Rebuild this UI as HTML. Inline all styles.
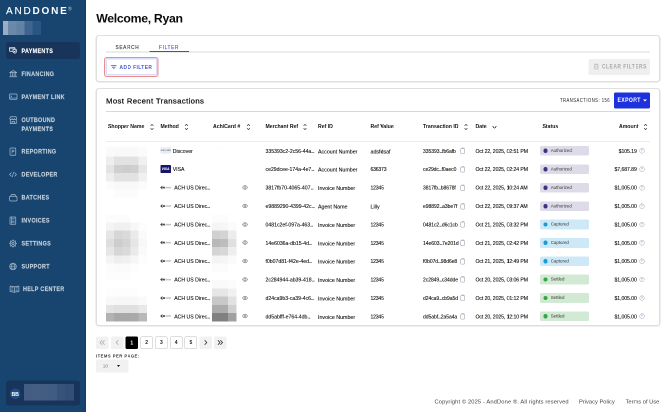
<!DOCTYPE html>
<html lang="en">
<head>
<meta charset="utf-8">
<title>AndDone - Payments</title>
<style>
*{box-sizing:border-box;margin:0;padding:0}
html,body{width:670px;height:412px;overflow:hidden;background:#fff}
body{font-family:"Liberation Sans",sans-serif;color:#111}
#root{position:absolute;left:0;top:0;width:1340px;height:824px;transform:scale(.5);transform-origin:0 0;will-change:transform;background:#fff;overflow:hidden}
.abs{position:absolute}
/* sidebar */
#side{position:absolute;left:0;top:0;width:171.6px;height:824px;background:#17456f;border-right:3px solid #143f69}
#logo{position:absolute;left:12px;top:9px;font-size:20px;letter-spacing:3.6px;color:#fff;white-space:nowrap;line-height:24px}
#logo b{font-weight:700}
#logo sup{color:#9fb2c8;font-size:10.5px;letter-spacing:0;position:relative;top:-7.5px;left:-1.5px;vertical-align:baseline;font-weight:700}
#logo span{-webkit-text-stroke:.25px #fff}
.nav{position:absolute;left:43px;font-size:12.3px;font-weight:700;letter-spacing:.7px;color:#c3d0dd;line-height:18px;white-space:nowrap;transform:translateY(-9px) scaleX(.88);transform-origin:0 50%;-webkit-text-stroke:.3px currentColor}
.nav.on{color:#fff}
.navbox{position:absolute;left:12.1px;width:147.9px;background:#18345b;border-radius:5px}
.ico{position:absolute;left:17px;width:17px;height:17px}
/* main */
h1{position:absolute;left:192.5px;top:20.8px;letter-spacing:-.6px;font-size:24.5px;font-weight:700;line-height:32px;white-space:nowrap;color:#0b0b0b}
.card{position:absolute;left:190.6px;width:1130.8px;border:3.4px solid #dfdfdf;border-top-width:2.2px;border-radius:7px;background:#fff}
.tab{position:absolute;font-size:11px;letter-spacing:1.6px;line-height:14px;top:86.7px;color:#333;white-space:nowrap;transform:scaleX(.86);transform-origin:0 50%;-webkit-text-stroke:.25px currentColor}
.hl{position:absolute;left:212px;width:1088px;height:2.4px;background:#d8d8d8}
.th{position:absolute;top:244.5px;font-size:10.3px;font-weight:700;line-height:16px;white-space:nowrap;color:#111}
.row{position:absolute;left:0;width:1340px;height:0}
.c{position:absolute;font-size:10.3px;line-height:14px;top:-5.6px;white-space:nowrap;color:#000;-webkit-text-stroke:.15px #000}
.c.t{font-size:10.6px}.c.n{letter-spacing:-.45px}.c.d{letter-spacing:-.18px}.c.i{font-size:10px;letter-spacing:-.08px}.c.a{font-size:10.3px;letter-spacing:-.15px}.e{letter-spacing:-1px}
.pill{position:absolute;left:1080px;top:-9.5px;width:98px;height:19.7px;border-radius:3px;font-size:8.8px;line-height:19.7px;padding-left:21.5px;color:#333}
.pill i{position:absolute;left:6.500px;top:5.500px;width:8.600px;height:8.600px;border-radius:50%}
.au{background:#dcdbe7}.au i{background:#3d3380}
.ca{background:#cde9f7}.ca i{background:#1a9bd8}
.se{background:#d2e9d3}.se i{background:#36a546}
.pg{position:absolute;top:672.6px;width:25.2px;height:25.2px;border-radius:3px;font-size:10px;font-weight:700;line-height:25.6px;text-align:center;color:#222}
.pg.o{border:1.5px solid #bdbdbd;line-height:22.2px}
.pg.g{background:#f1f1f1;color:#999}
.px{position:absolute}
</style>
</head>
<body>
<div id="root">
<div id="side">
  <div id="logo"><span>AND</span><b>DONE</b><sup>®</sup></div>
  <i class="px" style="left:6.0px;top:41.8px;width:10.6px;height:7.9px;background:#9db0c8"></i><i class="px" style="left:16.3px;top:41.8px;width:16.6px;height:7.9px;background:#6d8aac"></i><i class="px" style="left:32.6px;top:41.8px;width:16.6px;height:7.9px;background:#6483a6"></i><i class="px" style="left:48.9px;top:41.8px;width:16.6px;height:7.9px;background:#3f6590"></i><i class="px" style="left:65.2px;top:41.8px;width:16.5px;height:7.9px;background:#2a5683"></i><i class="px" style="left:6.0px;top:49.4px;width:10.6px;height:16.8px;background:#98acc5"></i><i class="px" style="left:16.3px;top:49.4px;width:16.6px;height:16.8px;background:#6a88aa"></i><i class="px" style="left:32.6px;top:49.4px;width:16.6px;height:16.8px;background:#6282a5"></i><i class="px" style="left:48.9px;top:49.4px;width:16.6px;height:16.8px;background:#3e648f"></i><i class="px" style="left:65.2px;top:49.4px;width:16.5px;height:16.8px;background:#295582"></i><i class="px" style="left:6.0px;top:65.9px;width:10.6px;height:3.8px;background:#98acc5"></i><i class="px" style="left:16.3px;top:65.9px;width:16.6px;height:3.8px;background:#6a88aa"></i><i class="px" style="left:32.6px;top:65.9px;width:16.6px;height:3.8px;background:#6282a5"></i><i class="px" style="left:48.9px;top:65.9px;width:16.6px;height:3.8px;background:#3e648f"></i><i class="px" style="left:65.2px;top:65.9px;width:16.5px;height:3.8px;background:#295582"></i>
  <div class="navbox" style="top:84px;height:33.5px"></div>
  <svg class="abs" style="left:18px;top:93.6px" width="16" height="13.4" viewBox="0 0 18 15" fill="none" stroke="#ffffff" stroke-width="1.5" stroke-linejoin="round" stroke-linecap="round"><rect x="1" y="1" width="12.5" height="8.5" rx="1.5"/><path d="M1 4h12.5"/><path d="M9 6.2l4-1.4 4 1.400v3.200c0 2.400-1.800 3.900-4 4.600-2.200-.7-4-2.200-4-4.600z" fill="#18345b"/><path d="M11.300 9.600l1.300 1.300 2.200-2.500"/></svg>
  <svg class="abs" style="left:18px;top:140px" width="17" height="15" viewBox="0 0 17 15" fill="none" stroke="#a9bbce" stroke-width="1.4" stroke-linejoin="round" stroke-linecap="round"><path d="M1.500 5.200L8.500 1.200l7 4z"/><path d="M3.500 6.800v5M6.800 6.800v5M10.200 6.800v5M13.500 6.800v5M1.500 13.500h14"/></svg>
  <svg class="abs" style="left:18px;top:187px" width="17" height="13" viewBox="0 0 17 13" fill="none" stroke="#a9bbce" stroke-width="1.4" stroke-linejoin="round" stroke-linecap="round"><rect x="1" y="1" width="15" height="10.500" rx="1.500"/><path d="M3.500 4.500l2 1.500-2 1.500M1.500 9h14" stroke-width="1.1"/></svg>
  <svg class="abs" style="left:18px;top:232px" width="17" height="17" viewBox="0 0 17 17" fill="none" stroke="#a9bbce" stroke-width="1.4" stroke-linejoin="round" stroke-linecap="round"><path d="M2.500 7.500v7.500h12V7.500M1.500 5l1.500-3.500h11L15.500 5c0 1.300-1 2.200-2.300 2.200S10.800 6.300 10.800 5c0 1.300-1 2.200-2.300 2.200S6.200 6.300 6.200 5c0 1.300-1 2.200-2.300 2.200S1.500 6.300 1.500 5zM6 15v-4h5v4"/></svg>
  <svg class="abs" style="left:19px;top:295px" width="14" height="17" viewBox="0 0 14 17" fill="none" stroke="#a9bbce" stroke-width="1.4" stroke-linejoin="round" stroke-linecap="round"><rect x="1" y="1" width="11.500" height="14.500" rx="1.800"/><path d="M5.200 11.500V5h2.200c1.200 0 1.900.7 1.900 1.700s-.7 1.700-1.900 1.700H5.200" stroke-width="1.2"/></svg>
  <svg class="abs" style="left:17.5px;top:343px" width="17" height="12" viewBox="0 0 17 12" fill="none" stroke="#a9bbce" stroke-width="1.4" stroke-linejoin="round" stroke-linecap="round"><path d="M4.500 2.500L1.200 6l3.300 3.500M11.500 2.500L14.800 6l-3.300 3.500M9.300 1.200L6.700 10.800" stroke-width="1.300"/></svg>
  <svg class="abs" style="left:18px;top:387.5px" width="17" height="15" viewBox="0 0 17 15" fill="none" stroke="#a9bbce" stroke-width="1.4" stroke-linejoin="round" stroke-linecap="round"><rect x="1" y="4.500" width="15" height="9.500" rx="2.200"/><path d="M4 4.500V3.200C4 2 4.800 1.200 6 1.200h5c1.200 0 2 .8 2 2v1.300"/></svg>
  <svg class="abs" style="left:19px;top:433px" width="14" height="17" viewBox="0 0 14 17" fill="none" stroke="#a9bbce" stroke-width="1.4" stroke-linejoin="round" stroke-linecap="round"><rect x="1" y="1" width="11.500" height="14.500" rx="1"/><path d="M3.500 4.500h6.500M3.500 7h6.500M3.500 9.500h6.500M3.500 12h6.500" stroke-width="1"/><path d="M4.200 1v14.500" stroke-width="1"/></svg>
  <svg class="abs" style="left:17.5px;top:479px" width="16" height="16" viewBox="0 0 16 16" fill="none" stroke="#a9bbce" stroke-width="1.4" stroke-linejoin="round" stroke-linecap="round"><circle cx="8" cy="8" r="5.600"/><circle cx="8" cy="8" r="2.300"/><path d="M8 .8v1.800M8 13.400v1.800M.8 8h1.800M13.400 8h1.800M2.900 2.900l1.300 1.300M11.800 11.800l1.300 1.300M2.900 13.100l1.300-1.300M11.800 4.200l1.300-1.300" stroke-width="1.600"/></svg>
  <svg class="abs" style="left:17.5px;top:525px" width="16" height="16" viewBox="0 0 16 16" fill="none" stroke="#a9bbce" stroke-width="1.4" stroke-linejoin="round" stroke-linecap="round"><circle cx="8" cy="8" r="6.600"/><ellipse cx="8" cy="8" rx="3" ry="6.600" stroke-width="1.100"/><path d="M1.500 8h13M2.500 4.700h11M2.500 11.300h11" stroke-width="1.100"/></svg>
  <svg class="abs" style="left:18.5px;top:570.5px" width="20" height="15" viewBox="0 0 20 15" fill="none" stroke="#a9bbce" stroke-width="1.4" stroke-linejoin="round" stroke-linecap="round"><path d="M10 3C8.500 1.800 6 1.300 1.200 1.300v10.900C6 12.200 8.500 12.700 10 13.900c1.500-1.200 4-1.700 8.800-1.700V1.300C14 1.300 11.500 1.800 10 3zM10 3v10.900"/><path d="M3.500 4.500h4M3.500 7h4M3.500 9.500h4M12.500 4.500h4M12.500 7h4M12.500 9.500h4" stroke-width="1"/></svg>
  <div class="nav on" style="top:102px">PAYMENTS</div>
  <div class="nav" style="top:148px">FINANCING</div>
  <div class="nav" style="top:194px">PAYMENT LINK</div>
  <div class="nav" style="top:240px">OUTBOUND</div>
  <div class="nav" style="top:258px">PAYMENTS</div>
  <div class="nav" style="top:303px">REPORTING</div>
  <div class="nav" style="top:349px">DEVELOPER</div>
  <div class="nav" style="top:395px">BATCHES</div>
  <div class="nav" style="top:441px">INVOICES</div>
  <div class="nav" style="top:487px">SETTINGS</div>
  <div class="nav" style="top:533px">SUPPORT</div>
  <div class="nav" style="top:578px;left:45.5px">HELP CENTER</div>
  <div class="navbox" style="top:761px;height:50px"></div>
  <i class="px" style="left:47.8px;top:768.2px;width:1.4px;height:6.7px;background:#435d82"></i><i class="px" style="left:48.9px;top:768.2px;width:16.6px;height:6.7px;background:#435d82"></i><i class="px" style="left:65.2px;top:768.2px;width:16.6px;height:6.7px;background:#445e83"></i><i class="px" style="left:81.5px;top:768.2px;width:16.6px;height:6.7px;background:#435d82"></i><i class="px" style="left:97.8px;top:768.2px;width:16.6px;height:6.7px;background:#425c81"></i><i class="px" style="left:114.1px;top:768.2px;width:16.6px;height:6.7px;background:#38537a"></i><i class="px" style="left:130.4px;top:768.2px;width:16.6px;height:6.7px;background:#344f77"></i><i class="px" style="left:146.7px;top:768.2px;width:1.6px;height:6.7px;background:#344f77"></i><i class="px" style="left:47.8px;top:774.6px;width:1.4px;height:16.8px;background:#435d82"></i><i class="px" style="left:48.9px;top:774.6px;width:16.6px;height:16.8px;background:#435d82"></i><i class="px" style="left:65.2px;top:774.6px;width:16.6px;height:16.8px;background:#445e83"></i><i class="px" style="left:81.5px;top:774.6px;width:16.6px;height:16.8px;background:#435d82"></i><i class="px" style="left:97.8px;top:774.6px;width:16.6px;height:16.8px;background:#425c81"></i><i class="px" style="left:114.1px;top:774.6px;width:16.6px;height:16.8px;background:#38537a"></i><i class="px" style="left:130.4px;top:774.6px;width:16.6px;height:16.8px;background:#344f77"></i><i class="px" style="left:146.7px;top:774.6px;width:1.6px;height:16.8px;background:#344f77"></i><i class="px" style="left:47.8px;top:791.0px;width:1.4px;height:9.7px;background:#435d82"></i><i class="px" style="left:48.9px;top:791.0px;width:16.6px;height:9.7px;background:#435d82"></i><i class="px" style="left:65.2px;top:791.0px;width:16.6px;height:9.7px;background:#445e83"></i><i class="px" style="left:81.5px;top:791.0px;width:16.6px;height:9.7px;background:#435d82"></i><i class="px" style="left:97.8px;top:791.0px;width:16.6px;height:9.7px;background:#425c81"></i><i class="px" style="left:114.1px;top:791.0px;width:16.6px;height:9.7px;background:#38537a"></i><i class="px" style="left:130.4px;top:791.0px;width:16.6px;height:9.7px;background:#344f77"></i><i class="px" style="left:146.7px;top:791.0px;width:1.6px;height:9.7px;background:#344f77"></i>
  <div class="abs" style="left:19.5px;top:776.5px;width:21.5px;height:21.5px;border-radius:50%;background:#1f4d85;color:#fff;font-size:10.5px;letter-spacing:-.3px;font-weight:700;line-height:22px;text-align:center">BB</div>
</div>

<h1>Welcome, Ryan</h1>

<div class="card" style="top:70px;height:95.2px"></div>
<div class="tab" style="left:231px">SEARCH</div>
<div class="tab" style="left:318px;color:#3a4bd6">FILTER</div>
<div class="hl" style="top:102.8px"></div>
<div class="abs" style="left:298.5px;top:101.5px;width:79px;height:2.5px;background:#3a4bd6"></div>
<div class="abs" style="left:208.2px;top:113.7px;width:108.8px;height:40px;border:2.4px solid #ea8f8c;border-radius:5.5px;background:#fff"></div>
<div class="abs" style="left:210.6px;top:116.1px;width:104px;height:35.2px;border:3px solid #d9ddfb;border-radius:3.5px;background:#fff"></div>
<svg class="abs" style="left:221px;top:129.5px" width="13" height="9" viewBox="0 0 13 9" stroke="#4355e0" stroke-width="1.600" fill="none"><path d="M.8 1.200h11.400M3 4.400h7M5.200 7.500h2.600"/></svg>
<div class="abs" style="left:239px;top:127px;font-size:11.3px;font-weight:700;letter-spacing:1px;line-height:14px;color:#4355e0;white-space:nowrap;transform:scaleX(.86);transform-origin:0 50%">ADD FILTER</div>
<div class="abs" style="left:1177.2px;top:118px;width:122.8px;height:31.8px;border-radius:3px;background:#efefef"></div>
<svg class="abs" style="left:1186.5px;top:127.3px" width="11" height="12" viewBox="0 0 11 13" preserveAspectRatio="none" stroke="#b4b4b4" stroke-width="1.300" fill="none"><path d="M1 3h9M3.500 3V1.300h4V3M2 3v7.700c0 .8.500 1.300 1.300 1.300h4.400c.8 0 1.300-.5 1.300-1.300V3M2.500 7.500h6"/></svg>
<div class="abs" style="left:1203.5px;top:126.3px;font-size:12px;font-weight:700;letter-spacing:1.1px;line-height:14px;color:#a9a9a9;white-space:nowrap;transform:scaleX(.83);transform-origin:0 50%">CLEAR FILTERS</div>

<div class="card" style="top:176.2px;height:477px"></div>
<div class="abs" style="left:212px;top:190.8px;font-size:15.5px;letter-spacing:.72px;line-height:22px;white-space:nowrap;color:#111;-webkit-text-stroke:.5px #111">Most Recent Transactions</div>
<div class="abs" style="left:1120px;top:194px;font-size:10px;letter-spacing:1.1px;line-height:14px;white-space:nowrap;color:#222;transform:scaleX(.84);transform-origin:0 50%">TRANSACTIONS: 156</div>
<div class="abs" style="left:1228px;top:184.5px;width:72px;height:32px;border-radius:3px;background:#1d32dc"></div>
<div class="abs" style="left:1234.5px;top:193.3px;font-size:12px;font-weight:700;letter-spacing:.9px;line-height:14px;color:#fff;white-space:nowrap;transform:scaleX(.85);transform-origin:0 50%">EXPORT</div>
<div class="abs" style="left:1286px;top:198.5px;width:0;height:0;border-left:4px solid transparent;border-right:4px solid transparent;border-top:4.6px solid #fff"></div>
<div class="hl" style="top:222px"></div>

<div class="th" style="left:216px">Shopper Name</div>
<div class="th" style="left:321px">Method</div>
<div class="th" style="left:426px">Ach/Card #</div>
<div class="th" style="left:531px">Merchant Ref</div>
<div class="th" style="left:636px">Ref ID</div>
<div class="th" style="left:741px">Ref Value</div>
<div class="th" style="left:846px">Transaction ID</div>
<div class="th" style="left:951px">Date</div>
<div class="th" style="left:1085px">Status</div>
<div class="th" style="left:1238px">Amount</div>
<svg class="abs" style="left:299.8px;top:246.5px" width="8" height="14" viewBox="0 0 8 14" fill="none" stroke="#222" stroke-width="1.3"><path d="M1.200 4.400L4 1.800l2.800 2.600M1.200 9.600L4 12.200l2.800-2.600"/></svg><svg class="abs" style="left:368.6px;top:246.5px" width="8" height="14" viewBox="0 0 8 14" fill="none" stroke="#222" stroke-width="1.3"><path d="M1.200 4.400L4 1.800l2.800 2.600M1.200 9.600L4 12.200l2.800-2.600"/></svg><svg class="abs" style="left:493.0px;top:246.5px" width="8" height="14" viewBox="0 0 8 14" fill="none" stroke="#222" stroke-width="1.3"><path d="M1.200 4.400L4 1.800l2.800 2.600M1.200 9.600L4 12.200l2.800-2.600"/></svg><svg class="abs" style="left:606.4px;top:246.5px" width="8" height="14" viewBox="0 0 8 14" fill="none" stroke="#222" stroke-width="1.3"><path d="M1.200 4.400L4 1.800l2.800 2.600M1.200 9.600L4 12.200l2.800-2.600"/></svg><svg class="abs" style="left:928.4px;top:246.5px" width="8" height="14" viewBox="0 0 8 14" fill="none" stroke="#222" stroke-width="1.3"><path d="M1.200 4.400L4 1.800l2.800 2.600M1.200 9.600L4 12.200l2.800-2.600"/></svg><svg class="abs" style="left:1287.4px;top:246.5px" width="8" height="14" viewBox="0 0 8 14" fill="none" stroke="#222" stroke-width="1.3"><path d="M1.200 4.400L4 1.800l2.800 2.600M1.200 9.600L4 12.200l2.800-2.600"/></svg><svg class="abs" style="left:983.5px;top:250.5px" width="10" height="7" viewBox="0 0 10 7" fill="none" stroke="#222" stroke-width="1.3"><path d="M1.200 1.200L5 5.200l3.800-4"/></svg>
<div class="hl" style="top:281.5px;height:1.5px"></div>

<div class="row" style="top:301.2px"><div class="abs" style="left:320.6px;top:-6.3px;width:21px;height:12.6px;border-radius:1.5px;background:#e9ecf2;border:.8px solid #dde3ec;font-size:3.8px;line-height:11px;text-align:center;color:#56749e;font-weight:700;letter-spacing:.1px">DISC<span style="color:#e2562f">●</span>VER</div><div class="c" style="left:345.5px">Discover</div><div class="c" style="left:531px">335393c2-2c56-44a<span class="e">...</span></div><div class="c t" style="left:636px">Account Number</div><div class="c t" style="left:741px">adsfdsaf</div><div class="c i" style="left:846px">335393<span class="e">...</span>fb6afb</div><svg class="abs" style="left:920px;top:-6.5px" width="11" height="13" viewBox="0 0 11 13"><rect x="1.2" y="2.2" width="8.2" height="10" rx="1.6" fill="#fff" stroke="#8893a8" stroke-width="1"/><path d="M3.2 1h5.4" stroke="#8893a8" stroke-width="1"/></svg><div class="c d" style="left:951px">Oct 22, 2025, 02:51 PM</div><div class="pill au"><i></i>Authorized</div><div class="c a" style="right:66.5px">$105.19</div><div class="abs" style="left:1278.5px;top:-5px;width:10.5px;height:10.5px;border-radius:50%;border:1px solid #9aa6ba;font-size:6.5px;line-height:8.5px;text-align:center;color:#8d99ae;font-weight:700">?</div></div>
<div class="row" style="top:338.0px"><div class="abs" style="left:320.6px;top:-7.6px;width:21px;height:15.2px;border-radius:1.5px;background:#17166f;font-size:7px;line-height:15.2px;text-align:center;color:#fff;font-weight:700;font-style:italic;letter-spacing:-.2px">VISA</div><div class="c" style="left:345.5px">VISA</div><div class="c" style="left:531px">ce29dcee-174a-4e7<span class="e">...</span></div><div class="c t" style="left:636px">Account Number</div><div class="c n" style="left:741px">636373</div><div class="c i" style="left:846px">ce29dc<span class="e">...</span>f0aec0</div><svg class="abs" style="left:920px;top:-6.5px" width="11" height="13" viewBox="0 0 11 13"><rect x="1.2" y="2.2" width="8.2" height="10" rx="1.6" fill="#fff" stroke="#8893a8" stroke-width="1"/><path d="M3.2 1h5.4" stroke="#8893a8" stroke-width="1"/></svg><div class="c d" style="left:951px">Oct 22, 2025, 02:24 PM</div><div class="pill au"><i></i>Authorized</div><div class="c a" style="right:66.5px">$7,687.89</div><div class="abs" style="left:1278.5px;top:-5px;width:10.5px;height:10.5px;border-radius:50%;border:1px solid #9aa6ba;font-size:6.5px;line-height:8.5px;text-align:center;color:#8d99ae;font-weight:700">?</div></div>
<div class="row" style="top:375.0px"><svg class="abs" style="left:320px;top:-5px" width="23" height="10" viewBox="0 0 23 10" fill="none"><path d="M5 2L1.300 5.100 5 8.200M1.800 5.100h6.400M6.800 3.300l3 3.600M9.800 3.300l-3 3.600" stroke="#2a2a2a" stroke-width="1.250"/><path d="M11 4.300h11M11 6h11" stroke="#9a9a9a" stroke-width=".9"/></svg><div class="c" style="left:348.5px">ACH US Direc<span class="e">...</span></div><svg class="abs" style="left:483.5px;top:-5px" width="12" height="10" viewBox="0 0 12 10"><path d="M.8 5C2.2 2.4 4 1.3 6 1.3S9.8 2.4 11.2 5C9.8 7.6 8 8.7 6 8.7S2.2 7.6.8 5Z" fill="none" stroke="#555" stroke-width="1"/><circle cx="6" cy="5" r="2.1" fill="none" stroke="#555" stroke-width="1"/></svg><div class="c" style="left:531px">3817fb70-4065-407<span class="e">...</span></div><div class="c t" style="left:636px">Invoice Number</div><div class="c n" style="left:741px">12345</div><div class="c i" style="left:846px">3817fb<span class="e">...</span>b8678f</div><svg class="abs" style="left:920px;top:-6.5px" width="11" height="13" viewBox="0 0 11 13"><rect x="1.2" y="2.2" width="8.2" height="10" rx="1.6" fill="#fff" stroke="#8893a8" stroke-width="1"/><path d="M3.2 1h5.4" stroke="#8893a8" stroke-width="1"/></svg><div class="c d" style="left:951px">Oct 22, 2025, 10:24 AM</div><div class="pill au"><i></i>Authorized</div><div class="c a" style="right:66.5px">$1,005.00</div><div class="abs" style="left:1278.5px;top:-5px;width:10.5px;height:10.5px;border-radius:50%;border:1px solid #9aa6ba;font-size:6.5px;line-height:8.5px;text-align:center;color:#8d99ae;font-weight:700">?</div></div>
<div class="row" style="top:412.0px"><svg class="abs" style="left:320px;top:-5px" width="23" height="10" viewBox="0 0 23 10" fill="none"><path d="M5 2L1.300 5.100 5 8.200M1.800 5.100h6.400M6.800 3.300l3 3.600M9.800 3.300l-3 3.600" stroke="#2a2a2a" stroke-width="1.250"/><path d="M11 4.300h11M11 6h11" stroke="#9a9a9a" stroke-width=".9"/></svg><div class="c" style="left:348.5px">ACH US Direc<span class="e">...</span></div><svg class="abs" style="left:483.5px;top:-5px" width="12" height="10" viewBox="0 0 12 10"><path d="M.8 5C2.2 2.4 4 1.3 6 1.3S9.8 2.4 11.2 5C9.8 7.6 8 8.7 6 8.7S2.2 7.6.8 5Z" fill="none" stroke="#555" stroke-width="1"/><circle cx="6" cy="5" r="2.1" fill="none" stroke="#555" stroke-width="1"/></svg><div class="c" style="left:531px">e9889290-4399-42c<span class="e">...</span></div><div class="c t" style="left:636px">Agent Name</div><div class="c t" style="left:741px">Lilly</div><div class="c i" style="left:846px">e98892<span class="e">...</span>a3be7f</div><svg class="abs" style="left:920px;top:-6.5px" width="11" height="13" viewBox="0 0 11 13"><rect x="1.2" y="2.2" width="8.2" height="10" rx="1.6" fill="#fff" stroke="#8893a8" stroke-width="1"/><path d="M3.2 1h5.4" stroke="#8893a8" stroke-width="1"/></svg><div class="c d" style="left:951px">Oct 22, 2025, 09:37 AM</div><div class="pill au"><i></i>Authorized</div><div class="c a" style="right:66.5px">$1,005.00</div><div class="abs" style="left:1278.5px;top:-5px;width:10.5px;height:10.5px;border-radius:50%;border:1px solid #9aa6ba;font-size:6.5px;line-height:8.5px;text-align:center;color:#8d99ae;font-weight:700">?</div></div>
<div class="row" style="top:448.8px"><svg class="abs" style="left:320px;top:-5px" width="23" height="10" viewBox="0 0 23 10" fill="none"><path d="M5 2L1.300 5.100 5 8.200M1.800 5.100h6.400M6.800 3.300l3 3.600M9.800 3.300l-3 3.600" stroke="#2a2a2a" stroke-width="1.250"/><path d="M11 4.300h11M11 6h11" stroke="#9a9a9a" stroke-width=".9"/></svg><div class="c" style="left:348.5px">ACH US Direc<span class="e">...</span></div><svg class="abs" style="left:483.5px;top:-5px" width="12" height="10" viewBox="0 0 12 10"><path d="M.8 5C2.2 2.4 4 1.3 6 1.3S9.8 2.4 11.2 5C9.8 7.6 8 8.7 6 8.7S2.2 7.6.8 5Z" fill="none" stroke="#555" stroke-width="1"/><circle cx="6" cy="5" r="2.1" fill="none" stroke="#555" stroke-width="1"/></svg><div class="c" style="left:531px">0481c2ef-097a-463<span class="e">...</span></div><div class="c t" style="left:636px">Invoice Number</div><div class="c n" style="left:741px">12345</div><div class="c i" style="left:846px">0481c2<span class="e">...</span>d6c1cb</div><svg class="abs" style="left:920px;top:-6.5px" width="11" height="13" viewBox="0 0 11 13"><rect x="1.2" y="2.2" width="8.2" height="10" rx="1.6" fill="#fff" stroke="#8893a8" stroke-width="1"/><path d="M3.2 1h5.4" stroke="#8893a8" stroke-width="1"/></svg><div class="c d" style="left:951px">Oct 21, 2025, 03:32 PM</div><div class="pill ca"><i></i>Captured</div><div class="c a" style="right:66.5px">$1,005.00</div><div class="abs" style="left:1278.5px;top:-5px;width:10.5px;height:10.5px;border-radius:50%;border:1px solid #9aa6ba;font-size:6.5px;line-height:8.5px;text-align:center;color:#8d99ae;font-weight:700">?</div></div>
<div class="row" style="top:485.4px"><svg class="abs" style="left:320px;top:-5px" width="23" height="10" viewBox="0 0 23 10" fill="none"><path d="M5 2L1.300 5.100 5 8.200M1.800 5.100h6.400M6.800 3.300l3 3.600M9.800 3.300l-3 3.600" stroke="#2a2a2a" stroke-width="1.250"/><path d="M11 4.300h11M11 6h11" stroke="#9a9a9a" stroke-width=".9"/></svg><div class="c" style="left:348.5px">ACH US Direc<span class="e">...</span></div><svg class="abs" style="left:483.5px;top:-5px" width="12" height="10" viewBox="0 0 12 10"><path d="M.8 5C2.2 2.4 4 1.3 6 1.3S9.8 2.4 11.2 5C9.8 7.6 8 8.7 6 8.7S2.2 7.6.8 5Z" fill="none" stroke="#555" stroke-width="1"/><circle cx="6" cy="5" r="2.1" fill="none" stroke="#555" stroke-width="1"/></svg><div class="c" style="left:531px">14e6036a-db15-4d<span class="e">...</span></div><div class="c t" style="left:636px">Invoice Number</div><div class="c n" style="left:741px">12345</div><div class="c i" style="left:846px">14e603<span class="e">...</span>7e201d</div><svg class="abs" style="left:920px;top:-6.5px" width="11" height="13" viewBox="0 0 11 13"><rect x="1.2" y="2.2" width="8.2" height="10" rx="1.6" fill="#fff" stroke="#8893a8" stroke-width="1"/><path d="M3.2 1h5.4" stroke="#8893a8" stroke-width="1"/></svg><div class="c d" style="left:951px">Oct 21, 2025, 02:42 PM</div><div class="pill ca"><i></i>Captured</div><div class="c a" style="right:66.5px">$1,005.00</div><div class="abs" style="left:1278.5px;top:-5px;width:10.5px;height:10.5px;border-radius:50%;border:1px solid #9aa6ba;font-size:6.5px;line-height:8.5px;text-align:center;color:#8d99ae;font-weight:700">?</div></div>
<div class="row" style="top:522.0px"><svg class="abs" style="left:320px;top:-5px" width="23" height="10" viewBox="0 0 23 10" fill="none"><path d="M5 2L1.300 5.100 5 8.200M1.800 5.100h6.400M6.800 3.300l3 3.600M9.800 3.300l-3 3.600" stroke="#2a2a2a" stroke-width="1.250"/><path d="M11 4.300h11M11 6h11" stroke="#9a9a9a" stroke-width=".9"/></svg><div class="c" style="left:348.5px">ACH US Direc<span class="e">...</span></div><svg class="abs" style="left:483.5px;top:-5px" width="12" height="10" viewBox="0 0 12 10"><path d="M.8 5C2.2 2.4 4 1.3 6 1.3S9.8 2.4 11.2 5C9.8 7.6 8 8.7 6 8.7S2.2 7.6.8 5Z" fill="none" stroke="#555" stroke-width="1"/><circle cx="6" cy="5" r="2.1" fill="none" stroke="#555" stroke-width="1"/></svg><div class="c" style="left:531px">f0b07d81-f42e-4ed<span class="e">...</span></div><div class="c t" style="left:636px">Invoice Number</div><div class="c n" style="left:741px">12345</div><div class="c i" style="left:846px">f0b07d<span class="e">...</span>98d6e8</div><svg class="abs" style="left:920px;top:-6.5px" width="11" height="13" viewBox="0 0 11 13"><rect x="1.2" y="2.2" width="8.2" height="10" rx="1.6" fill="#fff" stroke="#8893a8" stroke-width="1"/><path d="M3.2 1h5.4" stroke="#8893a8" stroke-width="1"/></svg><div class="c d" style="left:951px">Oct 21, 2025, 12:49 PM</div><div class="pill ca"><i></i>Captured</div><div class="c a" style="right:66.5px">$1,005.00</div><div class="abs" style="left:1278.5px;top:-5px;width:10.5px;height:10.5px;border-radius:50%;border:1px solid #9aa6ba;font-size:6.5px;line-height:8.5px;text-align:center;color:#8d99ae;font-weight:700">?</div></div>
<div class="row" style="top:558.8px"><svg class="abs" style="left:320px;top:-5px" width="23" height="10" viewBox="0 0 23 10" fill="none"><path d="M5 2L1.300 5.100 5 8.200M1.800 5.100h6.400M6.800 3.300l3 3.600M9.800 3.300l-3 3.600" stroke="#2a2a2a" stroke-width="1.250"/><path d="M11 4.300h11M11 6h11" stroke="#9a9a9a" stroke-width=".9"/></svg><div class="c" style="left:348.5px">ACH US Direc<span class="e">...</span></div><svg class="abs" style="left:483.5px;top:-5px" width="12" height="10" viewBox="0 0 12 10"><path d="M.8 5C2.2 2.4 4 1.3 6 1.3S9.8 2.4 11.2 5C9.8 7.6 8 8.7 6 8.7S2.2 7.6.8 5Z" fill="none" stroke="#555" stroke-width="1"/><circle cx="6" cy="5" r="2.1" fill="none" stroke="#555" stroke-width="1"/></svg><div class="c" style="left:531px">2c284944-ab39-418<span class="e">...</span></div><div class="c t" style="left:636px">Invoice Number</div><div class="c n" style="left:741px">12345</div><div class="c i" style="left:846px">2c2849<span class="e">...</span>c34dde</div><svg class="abs" style="left:920px;top:-6.5px" width="11" height="13" viewBox="0 0 11 13"><rect x="1.2" y="2.2" width="8.2" height="10" rx="1.6" fill="#fff" stroke="#8893a8" stroke-width="1"/><path d="M3.2 1h5.4" stroke="#8893a8" stroke-width="1"/></svg><div class="c d" style="left:951px">Oct 20, 2025, 03:06 PM</div><div class="pill se"><i></i>Settled</div><div class="c a" style="right:66.5px">$1,005.00</div><div class="abs" style="left:1278.5px;top:-5px;width:10.5px;height:10.5px;border-radius:50%;border:1px solid #9aa6ba;font-size:6.5px;line-height:8.5px;text-align:center;color:#8d99ae;font-weight:700">?</div></div>
<div class="row" style="top:595.6px"><svg class="abs" style="left:320px;top:-5px" width="23" height="10" viewBox="0 0 23 10" fill="none"><path d="M5 2L1.300 5.100 5 8.200M1.800 5.100h6.400M6.800 3.300l3 3.600M9.800 3.300l-3 3.600" stroke="#2a2a2a" stroke-width="1.250"/><path d="M11 4.300h11M11 6h11" stroke="#9a9a9a" stroke-width=".9"/></svg><div class="c" style="left:348.5px">ACH US Direc<span class="e">...</span></div><svg class="abs" style="left:483.5px;top:-5px" width="12" height="10" viewBox="0 0 12 10"><path d="M.8 5C2.2 2.4 4 1.3 6 1.3S9.8 2.4 11.2 5C9.8 7.6 8 8.7 6 8.7S2.2 7.6.8 5Z" fill="none" stroke="#555" stroke-width="1"/><circle cx="6" cy="5" r="2.1" fill="none" stroke="#555" stroke-width="1"/></svg><div class="c" style="left:531px">d24ca9b3-ca39-4c6<span class="e">...</span></div><div class="c t" style="left:636px">Invoice Number</div><div class="c n" style="left:741px">12345</div><div class="c i" style="left:846px">d24ca9<span class="e">...</span>cb9a5d</div><svg class="abs" style="left:920px;top:-6.5px" width="11" height="13" viewBox="0 0 11 13"><rect x="1.2" y="2.2" width="8.2" height="10" rx="1.6" fill="#fff" stroke="#8893a8" stroke-width="1"/><path d="M3.2 1h5.4" stroke="#8893a8" stroke-width="1"/></svg><div class="c d" style="left:951px">Oct 20, 2025, 01:12 PM</div><div class="pill se"><i></i>Settled</div><div class="c a" style="right:66.5px">$1,005.00</div><div class="abs" style="left:1278.5px;top:-5px;width:10.5px;height:10.5px;border-radius:50%;border:1px solid #9aa6ba;font-size:6.5px;line-height:8.5px;text-align:center;color:#8d99ae;font-weight:700">?</div></div>
<div class="row" style="top:632.2px"><svg class="abs" style="left:320px;top:-5px" width="23" height="10" viewBox="0 0 23 10" fill="none"><path d="M5 2L1.300 5.100 5 8.200M1.800 5.100h6.400M6.800 3.300l3 3.600M9.800 3.300l-3 3.600" stroke="#2a2a2a" stroke-width="1.250"/><path d="M11 4.300h11M11 6h11" stroke="#9a9a9a" stroke-width=".9"/></svg><div class="c" style="left:348.5px">ACH US Direc<span class="e">...</span></div><svg class="abs" style="left:483.5px;top:-5px" width="12" height="10" viewBox="0 0 12 10"><path d="M.8 5C2.2 2.4 4 1.3 6 1.3S9.8 2.4 11.2 5C9.8 7.6 8 8.7 6 8.7S2.2 7.6.8 5Z" fill="none" stroke="#555" stroke-width="1"/><circle cx="6" cy="5" r="2.1" fill="none" stroke="#555" stroke-width="1"/></svg><div class="c" style="left:531px">dd5abfff-e764-4db<span class="e">...</span></div><div class="c t" style="left:636px">Invoice Number</div><div class="c n" style="left:741px">12345</div><div class="c i" style="left:846px">dd5abf<span class="e">...</span>2a5a4a</div><svg class="abs" style="left:920px;top:-6.5px" width="11" height="13" viewBox="0 0 11 13"><rect x="1.2" y="2.2" width="8.2" height="10" rx="1.6" fill="#fff" stroke="#8893a8" stroke-width="1"/><path d="M3.2 1h5.4" stroke="#8893a8" stroke-width="1"/></svg><div class="c d" style="left:951px">Oct 20, 2025, 12:10 PM</div><div class="pill se"><i></i>Settled</div><div class="c a" style="right:66.5px">$1,005.00</div><div class="abs" style="left:1278.5px;top:-5px;width:10.5px;height:10.5px;border-radius:50%;border:1px solid #9aa6ba;font-size:6.5px;line-height:8.5px;text-align:center;color:#8d99ae;font-weight:700">?</div></div>
<i class="px" style="left:211.9px;top:293.0px;width:16.6px;height:3.9px;background:#fbfbfb"></i><i class="px" style="left:228.2px;top:293.0px;width:16.6px;height:3.9px;background:#fafafa"></i><i class="px" style="left:244.5px;top:293.0px;width:16.6px;height:3.9px;background:#fafafa"></i><i class="px" style="left:260.8px;top:293.0px;width:16.6px;height:3.9px;background:#fafafa"></i><i class="px" style="left:277.1px;top:293.0px;width:16.6px;height:3.9px;background:#fcfcfc"></i><i class="px" style="left:211.9px;top:296.6px;width:16.6px;height:16.8px;background:#fafafa"></i><i class="px" style="left:228.2px;top:296.6px;width:16.6px;height:16.8px;background:#f9f9f9"></i><i class="px" style="left:244.5px;top:296.6px;width:16.6px;height:16.8px;background:#f9f9f9"></i><i class="px" style="left:260.8px;top:296.6px;width:16.6px;height:16.8px;background:#f9f9f9"></i><i class="px" style="left:277.1px;top:296.6px;width:16.6px;height:16.8px;background:#fbfbfb"></i><i class="px" style="left:211.9px;top:313.1px;width:16.6px;height:16.8px;background:#eeeeee"></i><i class="px" style="left:228.2px;top:313.1px;width:16.6px;height:16.8px;background:#e2e2e2"></i><i class="px" style="left:244.5px;top:313.1px;width:16.6px;height:16.8px;background:#e2e2e2"></i><i class="px" style="left:260.8px;top:313.1px;width:16.6px;height:16.8px;background:#e2e2e2"></i><i class="px" style="left:277.1px;top:313.1px;width:16.6px;height:16.8px;background:#f0f0f0"></i><i class="px" style="left:211.9px;top:329.6px;width:16.6px;height:16.8px;background:#e4e4e4"></i><i class="px" style="left:228.2px;top:329.6px;width:16.6px;height:16.8px;background:#cfcfcf"></i><i class="px" style="left:244.5px;top:329.6px;width:16.6px;height:16.8px;background:#cdcdcd"></i><i class="px" style="left:260.8px;top:329.6px;width:16.6px;height:16.8px;background:#cfcfcf"></i><i class="px" style="left:277.1px;top:329.6px;width:16.6px;height:16.8px;background:#e6e6e6"></i><i class="px" style="left:211.9px;top:346.1px;width:16.6px;height:16.8px;background:#eeeeee"></i><i class="px" style="left:228.2px;top:346.1px;width:16.6px;height:16.8px;background:#e2e2e2"></i><i class="px" style="left:244.5px;top:346.1px;width:16.6px;height:16.8px;background:#e2e2e2"></i><i class="px" style="left:260.8px;top:346.1px;width:16.6px;height:16.8px;background:#e2e2e2"></i><i class="px" style="left:277.1px;top:346.1px;width:16.6px;height:16.8px;background:#f0f0f0"></i><i class="px" style="left:211.9px;top:362.6px;width:16.6px;height:16.8px;background:#fbfbfb"></i><i class="px" style="left:228.2px;top:362.6px;width:16.6px;height:16.8px;background:#f8f8f8"></i><i class="px" style="left:244.5px;top:362.6px;width:16.6px;height:16.8px;background:#f8f8f8"></i><i class="px" style="left:260.8px;top:362.6px;width:16.6px;height:16.8px;background:#f8f8f8"></i><i class="px" style="left:277.1px;top:362.6px;width:16.6px;height:16.8px;background:#fbfbfb"></i><i class="px" style="left:228.2px;top:379.0px;width:16.6px;height:16.8px;background:#fcfcfc"></i><i class="px" style="left:244.5px;top:379.0px;width:16.6px;height:16.8px;background:#fcfcfc"></i><i class="px" style="left:260.8px;top:379.0px;width:16.6px;height:16.8px;background:#fcfcfc"></i><i class="px" style="left:211.9px;top:428.5px;width:16.6px;height:16.8px;background:#fcfcfc"></i><i class="px" style="left:228.2px;top:428.5px;width:16.6px;height:16.8px;background:#fcfcfc"></i><i class="px" style="left:244.5px;top:428.5px;width:16.6px;height:16.8px;background:#fcfcfc"></i><i class="px" style="left:211.9px;top:445.0px;width:16.6px;height:16.8px;background:#f4f4f4"></i><i class="px" style="left:228.2px;top:445.0px;width:16.6px;height:16.8px;background:#f0f0f0"></i><i class="px" style="left:244.5px;top:445.0px;width:16.6px;height:16.8px;background:#f0f0f0"></i><i class="px" style="left:260.8px;top:445.0px;width:16.6px;height:16.8px;background:#f7f7f7"></i><i class="px" style="left:277.1px;top:445.0px;width:16.6px;height:16.8px;background:#fdfdfd"></i><i class="px" style="left:211.9px;top:461.4px;width:16.6px;height:16.8px;background:#e6e6e6"></i><i class="px" style="left:228.2px;top:461.4px;width:16.6px;height:16.8px;background:#d6d6d6"></i><i class="px" style="left:244.5px;top:461.4px;width:16.6px;height:16.8px;background:#dadada"></i><i class="px" style="left:260.8px;top:461.4px;width:16.6px;height:16.8px;background:#eaeaea"></i><i class="px" style="left:277.1px;top:461.4px;width:16.6px;height:16.8px;background:#fafafa"></i><i class="px" style="left:211.9px;top:477.9px;width:16.6px;height:16.8px;background:#dedede"></i><i class="px" style="left:228.2px;top:477.9px;width:16.6px;height:16.8px;background:#cdcdcd"></i><i class="px" style="left:244.5px;top:477.9px;width:16.6px;height:16.8px;background:#d4d4d4"></i><i class="px" style="left:260.8px;top:477.9px;width:16.6px;height:16.8px;background:#e6e6e6"></i><i class="px" style="left:277.1px;top:477.9px;width:16.6px;height:16.8px;background:#f8f8f8"></i><i class="px" style="left:211.9px;top:494.4px;width:16.6px;height:16.8px;background:#e6e6e6"></i><i class="px" style="left:228.2px;top:494.4px;width:16.6px;height:16.8px;background:#d6d6d6"></i><i class="px" style="left:244.5px;top:494.4px;width:16.6px;height:16.8px;background:#dadada"></i><i class="px" style="left:260.8px;top:494.4px;width:16.6px;height:16.8px;background:#eaeaea"></i><i class="px" style="left:277.1px;top:494.4px;width:16.6px;height:16.8px;background:#fafafa"></i><i class="px" style="left:211.9px;top:510.9px;width:16.6px;height:16.8px;background:#f4f4f4"></i><i class="px" style="left:228.2px;top:510.9px;width:16.6px;height:16.8px;background:#eeeeee"></i><i class="px" style="left:244.5px;top:510.9px;width:16.6px;height:16.8px;background:#f0f0f0"></i><i class="px" style="left:260.8px;top:510.9px;width:16.6px;height:16.8px;background:#f6f6f6"></i><i class="px" style="left:277.1px;top:510.9px;width:16.6px;height:16.8px;background:#fdfdfd"></i><i class="px" style="left:211.9px;top:527.4px;width:16.6px;height:16.8px;background:#fcfcfc"></i><i class="px" style="left:228.2px;top:527.4px;width:16.6px;height:16.8px;background:#fbfbfb"></i><i class="px" style="left:244.5px;top:527.4px;width:16.6px;height:16.8px;background:#fbfbfb"></i><i class="px" style="left:260.8px;top:527.4px;width:16.6px;height:16.8px;background:#fdfdfd"></i><i class="px" style="left:211.9px;top:543.8px;width:16.6px;height:16.8px;background:#fdfdfd"></i><i class="px" style="left:228.2px;top:543.8px;width:16.6px;height:16.8px;background:#fdfdfd"></i><i class="px" style="left:244.5px;top:543.8px;width:16.6px;height:16.8px;background:#fdfdfd"></i><i class="px" style="left:211.9px;top:576.8px;width:16.6px;height:16.8px;background:#fdfdfd"></i><i class="px" style="left:228.2px;top:576.8px;width:16.6px;height:16.8px;background:#fdfdfd"></i><i class="px" style="left:244.5px;top:576.8px;width:16.6px;height:16.8px;background:#fdfdfd"></i><i class="px" style="left:260.8px;top:576.8px;width:16.6px;height:16.8px;background:#fdfdfd"></i><i class="px" style="left:211.9px;top:593.3px;width:16.6px;height:16.8px;background:#f8f8f8"></i><i class="px" style="left:228.2px;top:593.3px;width:16.6px;height:16.8px;background:#f7f7f7"></i><i class="px" style="left:244.5px;top:593.3px;width:16.6px;height:16.8px;background:#f7f7f7"></i><i class="px" style="left:260.8px;top:593.3px;width:16.6px;height:16.8px;background:#f7f7f7"></i><i class="px" style="left:277.1px;top:593.3px;width:16.6px;height:16.8px;background:#fafafa"></i><i class="px" style="left:211.9px;top:609.8px;width:16.6px;height:16.8px;background:#e4e4e4"></i><i class="px" style="left:228.2px;top:609.8px;width:16.6px;height:16.8px;background:#e0e0e0"></i><i class="px" style="left:244.5px;top:609.8px;width:16.6px;height:16.8px;background:#e0e0e0"></i><i class="px" style="left:260.8px;top:609.8px;width:16.6px;height:16.8px;background:#e0e0e0"></i><i class="px" style="left:277.1px;top:609.8px;width:16.6px;height:16.8px;background:#e8e8e8"></i><i class="px" style="left:211.9px;top:626.2px;width:16.6px;height:16.8px;background:#b2b2b2"></i><i class="px" style="left:228.2px;top:626.2px;width:16.6px;height:16.8px;background:#a8a8a8"></i><i class="px" style="left:244.5px;top:626.2px;width:16.6px;height:16.8px;background:#a8a8a8"></i><i class="px" style="left:260.8px;top:626.2px;width:16.6px;height:16.8px;background:#aaaaaa"></i><i class="px" style="left:277.1px;top:626.2px;width:16.6px;height:16.8px;background:#b8b8b8"></i><i class="px" style="left:423.8px;top:293.0px;width:16.6px;height:3.9px;background:#fdfdfd"></i><i class="px" style="left:440.1px;top:293.0px;width:16.6px;height:3.9px;background:#fdfdfd"></i><i class="px" style="left:423.8px;top:428.5px;width:16.6px;height:16.8px;background:#fcfcfc"></i><i class="px" style="left:440.1px;top:428.5px;width:16.6px;height:16.8px;background:#fcfcfc"></i><i class="px" style="left:423.8px;top:445.0px;width:16.6px;height:16.8px;background:#f5f5f5"></i><i class="px" style="left:440.1px;top:445.0px;width:16.6px;height:16.8px;background:#f6f6f6"></i><i class="px" style="left:456.4px;top:445.0px;width:16.6px;height:16.8px;background:#fbfbfb"></i><i class="px" style="left:423.8px;top:461.4px;width:16.6px;height:16.8px;background:#d0d0d0"></i><i class="px" style="left:440.1px;top:461.4px;width:16.6px;height:16.8px;background:#d3d3d3"></i><i class="px" style="left:456.4px;top:461.4px;width:16.6px;height:16.8px;background:#ececec"></i><i class="px" style="left:423.8px;top:477.9px;width:16.6px;height:16.8px;background:#b8b8b8"></i><i class="px" style="left:440.1px;top:477.9px;width:16.6px;height:16.8px;background:#bdbdbd"></i><i class="px" style="left:456.4px;top:477.9px;width:16.6px;height:16.8px;background:#e0e0e0"></i><i class="px" style="left:423.8px;top:494.4px;width:16.6px;height:16.8px;background:#d4d4d4"></i><i class="px" style="left:440.1px;top:494.4px;width:16.6px;height:16.8px;background:#d7d7d7"></i><i class="px" style="left:456.4px;top:494.4px;width:16.6px;height:16.8px;background:#eeeeee"></i><i class="px" style="left:423.8px;top:510.9px;width:16.6px;height:16.8px;background:#f4f4f4"></i><i class="px" style="left:440.1px;top:510.9px;width:16.6px;height:16.8px;background:#f5f5f5"></i><i class="px" style="left:456.4px;top:510.9px;width:16.6px;height:16.8px;background:#fafafa"></i><i class="px" style="left:423.8px;top:527.4px;width:16.6px;height:16.8px;background:#fcfcfc"></i><i class="px" style="left:440.1px;top:527.4px;width:16.6px;height:16.8px;background:#fcfcfc"></i><i class="px" style="left:423.8px;top:560.3px;width:16.6px;height:16.8px;background:#fafafa"></i><i class="px" style="left:440.1px;top:560.3px;width:16.6px;height:16.8px;background:#fafafa"></i><i class="px" style="left:456.4px;top:560.3px;width:16.6px;height:16.8px;background:#fcfcfc"></i><i class="px" style="left:423.8px;top:576.8px;width:16.6px;height:16.8px;background:#e6e6e6"></i><i class="px" style="left:440.1px;top:576.8px;width:16.6px;height:16.8px;background:#e6e6e6"></i><i class="px" style="left:456.4px;top:576.8px;width:16.6px;height:16.8px;background:#f1f1f1"></i><i class="px" style="left:423.8px;top:593.3px;width:16.6px;height:16.8px;background:#c8c8c8"></i><i class="px" style="left:440.1px;top:593.3px;width:16.6px;height:16.8px;background:#c8c8c8"></i><i class="px" style="left:456.4px;top:593.3px;width:16.6px;height:16.8px;background:#e1e1e1"></i><i class="px" style="left:423.8px;top:609.8px;width:16.6px;height:16.8px;background:#acacac"></i><i class="px" style="left:440.1px;top:609.8px;width:16.6px;height:16.8px;background:#acacac"></i><i class="px" style="left:456.4px;top:609.8px;width:16.6px;height:16.8px;background:#d0d0d0"></i><i class="px" style="left:423.8px;top:626.2px;width:16.6px;height:16.8px;background:#808080"></i><i class="px" style="left:440.1px;top:626.2px;width:16.6px;height:16.8px;background:#808080"></i><i class="px" style="left:456.4px;top:626.2px;width:16.6px;height:16.8px;background:#a0a0a0"></i>

<div class="pg g" style="left:192px"><svg style="position:absolute;left:6px;top:6.500px" width="13" height="12" viewBox="0 0 13 12" fill="none" stroke="#a8a8a8" stroke-width="1.500"><path d="M6.200 1.500L2 6l4.200 4.500M11.200 1.500L7 6l4.200 4.500"/></svg></div>
<div class="pg g" style="left:221.5px"><svg style="position:absolute;left:6px;top:6.500px" width="13" height="12" viewBox="0 0 13 12" fill="none" stroke="#a8a8a8" stroke-width="1.500"><path d="M8.600 1.500L4.400 6l4.200 4.500"/></svg></div>
<div class="pg" style="left:251px;background:#000;color:#fff">1</div>
<div class="pg o" style="left:280.6px">2</div>
<div class="pg o" style="left:310.1px">3</div>
<div class="pg o" style="left:339.6px">4</div>
<div class="pg o" style="left:369.1px">5</div>
<div class="pg g" style="left:398.6px"><svg style="position:absolute;left:6px;top:6.500px" width="13" height="12" viewBox="0 0 13 12" fill="none" stroke="#222" stroke-width="1.500"><path d="M4.400 1.500L8.600 6l-4.200 4.500"/></svg></div>
<div class="pg g" style="left:428.2px"><svg style="position:absolute;left:6px;top:6.500px" width="13" height="12" viewBox="0 0 13 12" fill="none" stroke="#222" stroke-width="1.500"><path d="M1.800 1.500L6 6l-4.200 4.500M6.800 1.500L11 6l-4.200 4.500"/></svg></div>
<div class="abs" style="left:192px;top:705.2px;font-size:9.8px;font-weight:700;letter-spacing:1.05px;line-height:14px;white-space:nowrap;color:#333;transform:scaleX(.86);transform-origin:0 50%">ITEMS PER PAGE:</div>
<div class="abs" style="left:192px;top:719.4px;width:64.8px;height:25.6px;border-radius:3px;background:#f1f1f1"></div>
<div class="abs" style="left:205.5px;top:725.2px;font-size:9.3px;line-height:14px;color:#7a7a7a">10</div>
<div class="abs" style="left:234px;top:730px;width:0;height:0;border-left:3.8px solid transparent;border-right:3.8px solid transparent;border-top:4.600px solid #111"></div>

<div class="abs" style="left:869px;top:795px;font-size:11.5px;line-height:16px;white-space:nowrap;letter-spacing:.24px;color:#444">Copyright © 2025 - AndDone ®. All rights reserved</div>
<div class="abs" style="left:1158px;top:795px;font-size:11.5px;line-height:16px;white-space:nowrap;color:#444">Privacy Policy</div>
<div class="abs" style="left:1251px;top:795px;font-size:11.5px;line-height:16px;white-space:nowrap;color:#444">Terms of Use</div>
</div>
</body>
</html>
